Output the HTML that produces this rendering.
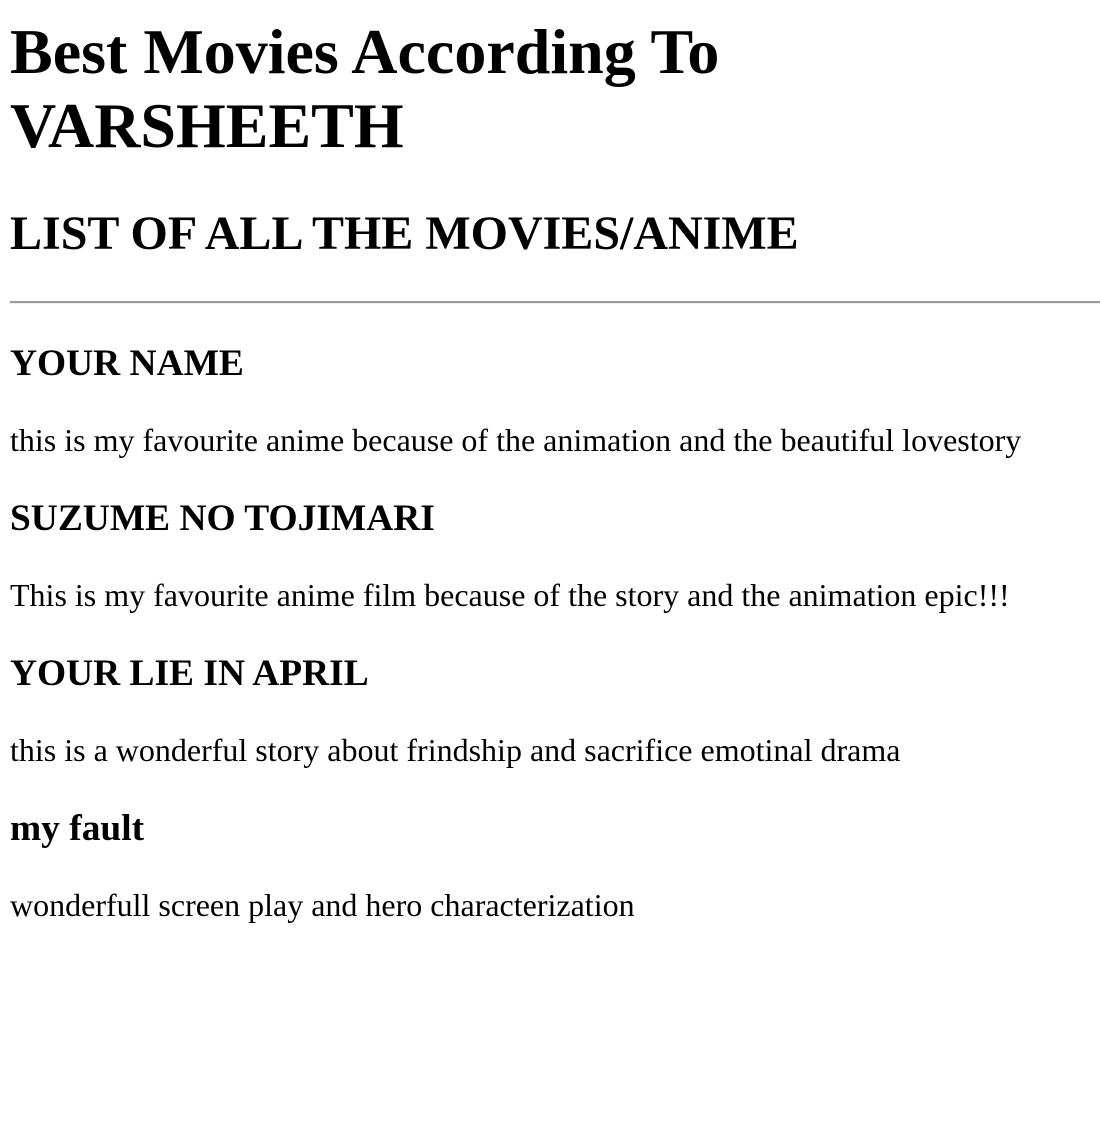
<!DOCTYPE html>
<html><head><meta charset="utf-8"><style>
html,body{background:#fff;}
body{margin:0 10px;font-family:"Liberation Serif","Times New Roman",serif;color:#000;}
h1{font-size:64px;margin:15px 0 43px;font-weight:bold;line-height:normal;}
h2{font-size:48px;margin:40px 0;font-weight:bold;}
h3{font-size:37.44px;margin:37.5px 0;font-weight:bold;}
p{font-size:32px;margin:33px 0;}
hr{margin:16px -10px 17px 0;border:0;border-top:2px solid #9a9a9a;border-bottom:1px solid #eee;height:0;}
</style></head><body>
<h1>Best Movies According To VARSHEETH</h1>
<h2>LIST OF ALL THE MOVIES/ANIME</h2>
<hr>
<h3>YOUR NAME</h3>
<p>this is my favourite anime because of the animation and the beautiful lovestory</p>
<h3>SUZUME NO TOJIMARI</h3>
<p>This is my favourite anime film because of the story and the animation epic!!!</p>
<h3>YOUR LIE IN APRIL</h3>
<p>this is a wonderful story about frindship and sacrifice emotinal drama</p>
<h3>my fault</h3>
<p>wonderfull screen play and hero characterization</p>
</body></html>
